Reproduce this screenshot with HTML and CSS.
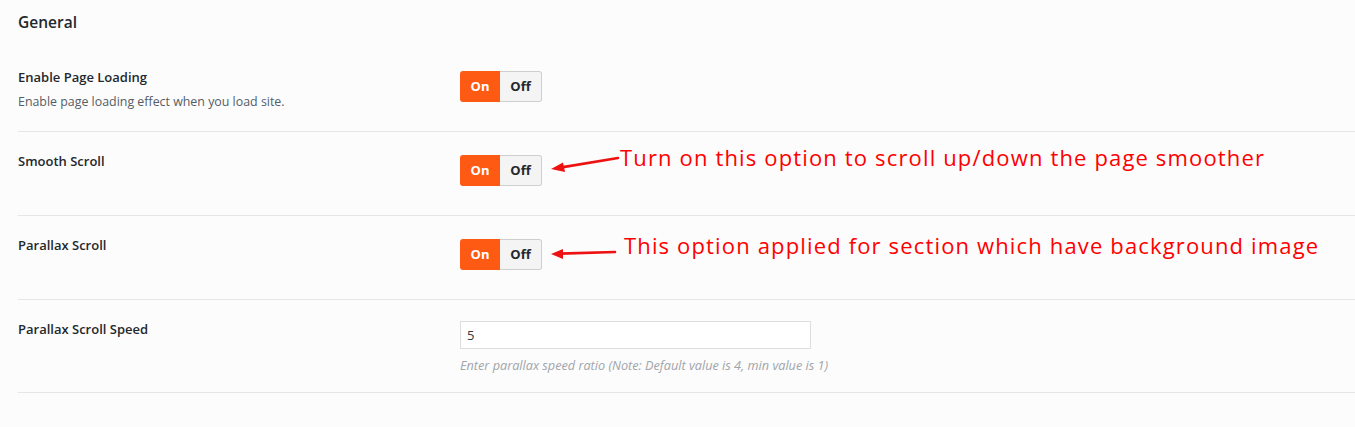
FILE: index.html
```html
<!DOCTYPE html>
<html lang="en">
<head>
<meta charset="utf-8">
<title>General settings</title>
<link rel="stylesheet" href="styles.css">
</head>
<body>
<div class="panel">
  <h2 class="panel-title">General</h2>

  <div class="row row-first">
    <div class="label-col">
      <div class="label">Enable Page Loading</div>
      <div class="desc">Enable page loading effect when you load site.</div>
    </div>
    <div class="control-col">
      <div class="toggle"><span class="on">On</span><span class="off">Off</span></div>
    </div>
  </div>

  <div class="row">
    <div class="label-col">
      <div class="label">Smooth Scroll</div>
    </div>
    <div class="control-col">
      <div class="toggle"><span class="on">On</span><span class="off">Off</span></div>
      <div class="note note-a">
        <svg class="arrow" width="78" height="31" viewBox="0 0 78 31">
          <line x1="76" y1="3" x2="18" y2="12.6" stroke="#ee1111" stroke-width="2.6" stroke-linecap="round"/>
          <polygon points="9,14 21,7.5 23,17" fill="#ee1111"/>
        </svg>
        <span class="note-text note-text-a">Turn on this option to scroll up/down the page smoother</span>
      </div>
    </div>
  </div>

  <div class="row">
    <div class="label-col">
      <div class="label">Parallax Scroll</div>
    </div>
    <div class="control-col">
      <div class="toggle"><span class="on">On</span><span class="off">Off</span></div>
      <div class="note note-b">
        <svg class="arrow" width="82" height="31" viewBox="0 0 82 31">
          <line x1="73" y1="13" x2="18" y2="14.6" stroke="#ee1111" stroke-width="2.6" stroke-linecap="round"/>
          <polygon points="9,15 21,10 21,20" fill="#ee1111"/>
        </svg>
        <span class="note-text note-text-b">This option applied for section which have background image</span>
      </div>
    </div>
  </div>

  <div class="row row-input">
    <div class="label-col">
      <div class="label">Parallax Scroll Speed</div>
    </div>
    <div class="control-col control-stack">
      <div class="text-input">5</div>
      <div class="help">Enter parallax speed ratio (Note: Default value is 4, min value is 1)</div>
    </div>
  </div>
</div>
</body>
</html>
```

FILE: styles.css
```css
html, body {
  margin: 0;
  padding: 0;
  background: #fcfcfc;
}

body {
  font-family: "Open Sans", "Noto Sans", sans-serif;
  color: #23282d;
  width: 1355px;
  height: 427px;
  overflow: hidden;
}

.panel {
  padding-left: 18px;
}

.panel-title {
  margin: 0;
  padding-top: 12px;
  margin-bottom: 16px;
  font-size: 15.5px;
  line-height: 20px;
  font-weight: 600;
  color: #23282d;
}

.row {
  display: flex;
  padding: 23px 0 29px;
  border-bottom: 1px solid #e6e6e6;
}

.row-first {
  padding-bottom: 21px;
}

.row-input {
  padding: 21px 0 0;
  height: 71px;
}

.label-col {
  width: 442px;
  flex: none;
}

.label {
  font-size: 13px;
  line-height: 16px;
  font-weight: 600;
  color: #23282d;
  margin-top: -2px;
}

.row-input .label {
  margin-top: 0;
}

.desc {
  margin-top: 9px;
  font-size: 12.4px;
  line-height: 16px;
  color: #555d66;
}

.control-col {
  display: flex;
  align-items: flex-start;
}

.control-stack {
  flex-direction: column;
}

.toggle {
  display: flex;
  width: 82px;
  height: 31px;
  box-sizing: border-box;
  font-size: 13px;
  font-weight: 700;
  line-height: 31px;
  text-align: center;
}

.toggle .on {
  width: 40px;
  background: #ff5a14;
  color: #ffffff;
  border-radius: 3px 0 0 3px;
}

.toggle .off {
  width: 42px;
  box-sizing: border-box;
  background: #f4f4f4;
  color: #23282d;
  border: 1px solid #cfcfcf;
  border-left: none;
  border-radius: 0 3px 3px 0;
  line-height: 29px;
}

.note {
  display: flex;
  align-items: flex-start;
}

.arrow {
  display: block;
  flex: none;
}

.note-text {
  color: #ff0000;
  font-family: "Open Sans", "Noto Sans", sans-serif;
  font-size: 22px;
  letter-spacing: 1.15px;
  line-height: 30px;
  white-space: nowrap;
}

.note-text-a {
  margin-top: -13px;
}

.note-text-b {
  margin-top: -9px;
}

.text-input {
  width: 351px;
  height: 28px;
  box-sizing: border-box;
  border: 1px solid #dddddd;
  background: #ffffff;
  padding-left: 6px;
  font-size: 13px;
  line-height: 26px;
  color: #32373c;
}

.help {
  margin-top: 8px;
  font-size: 12.7px;
  line-height: 16px;
  font-style: italic;
  color: #a0a5aa;
}
```
